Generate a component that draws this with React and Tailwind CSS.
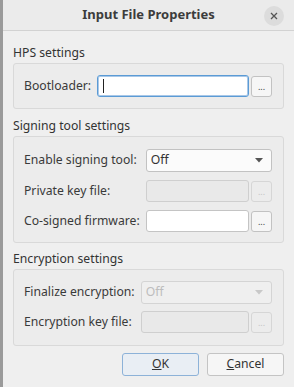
import React from "react";

const font = { fontFamily: '"Noto Sans", "Open Sans", sans-serif' };

function Browse({ disabled }) {
     return (
          <div className={`ml-[2px] flex h-[21px] w-[21px] shrink-0 items-end justify-center rounded-[3px] border pb-[5px] text-[9px] leading-none ${disabled ? "border-[#d6d6d6] bg-[#ececec] text-[#c4c4c4]" : "border-[#c2c2c2] bg-[#f6f6f6] text-[#444]"}`}>
               ...
          </div>
     );
}

function FileField({ disabled, focused }) {
     return (
          <div className="flex items-center">
               <div className={`h-[22px] flex-1 rounded-[3px] border ${focused ? "border-[#5b9bd5] bg-white shadow-[inset_0_0_0_1px_#a9c8e8]" : disabled ? "border-[#cfcfcf] bg-[#e9e9e9]" : "border-[#c4c4c4] bg-white"}`}>
                    {focused && <div className="ml-[5px] mt-[3px] h-[14px] w-px bg-[#222]" />}
               </div>
               <Browse disabled={disabled} />
          </div>
     );
}

function Combo({ disabled }) {
     return (
          <div className={`flex h-[23px] items-center justify-between rounded-[3px] border px-[4px] ${disabled ? "border-[#d4d4d4] bg-[#efefef] text-[#bdbdbd]" : "border-[#c2c2c2] bg-[#fbfbfb] text-[#333]"}`}>
               <span className="text-[12.2px]">Off</span>
               <svg width="8" height="5" viewBox="0 0 8 5" className="mr-[4px]">
                    <path d="M0 0 L8 0 L4 4.5 Z" fill={disabled ? "#c8c8c8" : "#555"} />
               </svg>
          </div>
     );
}

function Group({ title, children, titleGap, box, rowGap }) {
     return (
          <div>
               <div className={`h-[13px] text-[12.2px] leading-[13px] text-[#333] ${titleGap}`}>{title}</div>
               <div className={`mt-[4px] rounded-[3px] border border-[#d9d9d9] bg-[#ececec] pl-[10px] pr-[11px] ${box}`}>
                    <div className={`grid grid-cols-[auto_1fr] items-center gap-x-[6px] ${rowGap}`}>
                         {children}
                    </div>
               </div>
          </div>
     );
}

const Label = ({ children }) => <div className="text-[12.2px] text-[#3a3a3a]">{children}</div>;

export default function App() {
     return (
          <div className="flex h-[387px] w-[294px] bg-[#f0f0f0]" style={font}>
               <div className="w-[3px] shrink-0 bg-[#9a9a9a]" />
               <div className="flex flex-1 flex-col rounded-tl-[6px] bg-[#efefef]">
                    {/* title bar */}
                    <div className="relative flex h-[31px] shrink-0 items-center justify-center border-b border-[#d2d2d2] bg-[#ebebeb]">
                         <span className="text-[13px] font-bold text-[#3c3c3c]">Input File Properties</span>
                         <div className="absolute right-[10px] top-[6px] flex h-[20px] w-[20px] items-center justify-center rounded-full bg-[#dcdcdc]">
                              <svg width="8" height="8" viewBox="0 0 8 8">
                                   <path d="M1 1 L7 7 M7 1 L1 7" stroke="#555" strokeWidth="1.3" />
                              </svg>
                         </div>
                    </div>

                    <div className="flex flex-col px-[10px]">
                         <Group title="HPS settings" titleGap="mt-[15px] mb-[2px]" box="py-[11px]" rowGap="gap-y-[8px]">
                              <Label>Bootloader:</Label>
                              <FileField focused />
                         </Group>

                         <Group title="Signing tool settings" titleGap="mt-[10px]" box="pt-[12px] pb-[10px]" rowGap="gap-y-[8px]">
                              <Label>Enable signing tool:</Label>
                              <Combo />
                              <Label>Private key file:</Label>
                              <FileField disabled />
                              <Label>Co-signed firmware:</Label>
                              <FileField />
                         </Group>

                         <Group title="Encryption settings" titleGap="mt-[9px]" box="pt-[11px] pb-[12px]" rowGap="gap-y-[7px]">
                              <Label>Finalize encryption:</Label>
                              <Combo disabled />
                              <Label>Encryption key file:</Label>
                              <FileField disabled />
                         </Group>

                         <div className="mt-[7px] flex justify-end gap-[8px]">
                              <button className="h-[23px] w-[77px] rounded-[3px] border border-[#8db2d8] bg-[#e9eef4] text-[12.2px] text-[#333]">
                                   <span className="underline">O</span>K
                              </button>
                              <button className="h-[23px] w-[77px] rounded-[3px] border border-[#c4c4c4] bg-[#f6f6f6] text-[12.2px] text-[#333]">
                                   <span className="underline">C</span>ancel
                              </button>
                         </div>
                    </div>
               </div>
          </div>
     );
}
